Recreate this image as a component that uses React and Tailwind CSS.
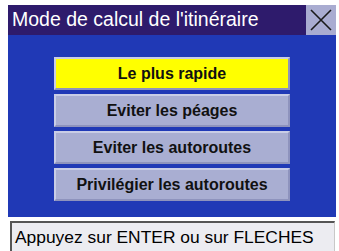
import React from "react";

const options = [
  { label: "Le plus rapide", active: true },
  { label: "Eviter les péages" },
  { label: "Eviter les autoroutes" },
  { label: "Privilégier les autoroutes" },
];

const RouteOption = ({ label, active }) => (
  <div
    className={`h-[33px] flex items-center justify-center border-2 border-t-[#c9cde6] border-l-[#c9cde6] border-r-[#8e93bd] border-b-[#8e93bd] text-[16px] font-bold text-[#111] ${
      active ? "bg-[#ffff00]" : "bg-[#a9aed2]"
    }`}
  >
    {label}
  </div>
);

export default function App() {
  return (
    <div
      className="w-[339px] h-[251px] bg-white pt-[5px] pl-[8px] pr-[3px] overflow-hidden"
      style={{ fontFamily: '"Liberation Sans", Arial, sans-serif' }}
    >
      <div className="flex h-[30px]">
        <div className="flex-1 bg-[#2e1b6c] text-white text-[19.5px] leading-none flex items-center pl-[4px]">
          Mode de calcul de l'itinéraire
        </div>
        <div className="w-[30px] bg-[#a9acd1] flex items-center justify-center">
          <svg width="24" height="24" viewBox="0 0 24 24">
            <path d="M2 2 L22 22 M22 2 L2 22" stroke="#1a1a1a" strokeWidth="1.6" fill="none" />
          </svg>
        </div>
      </div>

      <div className="bg-[#2039b6] h-[182px] pt-[22px] px-[46px] flex flex-col gap-[4px]">
        {options.map((o) => (
          <RouteOption key={o.label} {...o} />
        ))}
      </div>

      <div className="mt-[4px] ml-[2px] mr-[1px] h-[32px] bg-[#ececf1] border-t-2 border-l-2 border-t-[#555] border-l-[#555] border-r border-b border-r-[#c8c8c8] border-b-[#c8c8c8] flex items-center pl-[3px] text-[17.4px] text-black leading-none">
        Appuyez sur ENTER ou sur FLECHES
      </div>
    </div>
  );
}
